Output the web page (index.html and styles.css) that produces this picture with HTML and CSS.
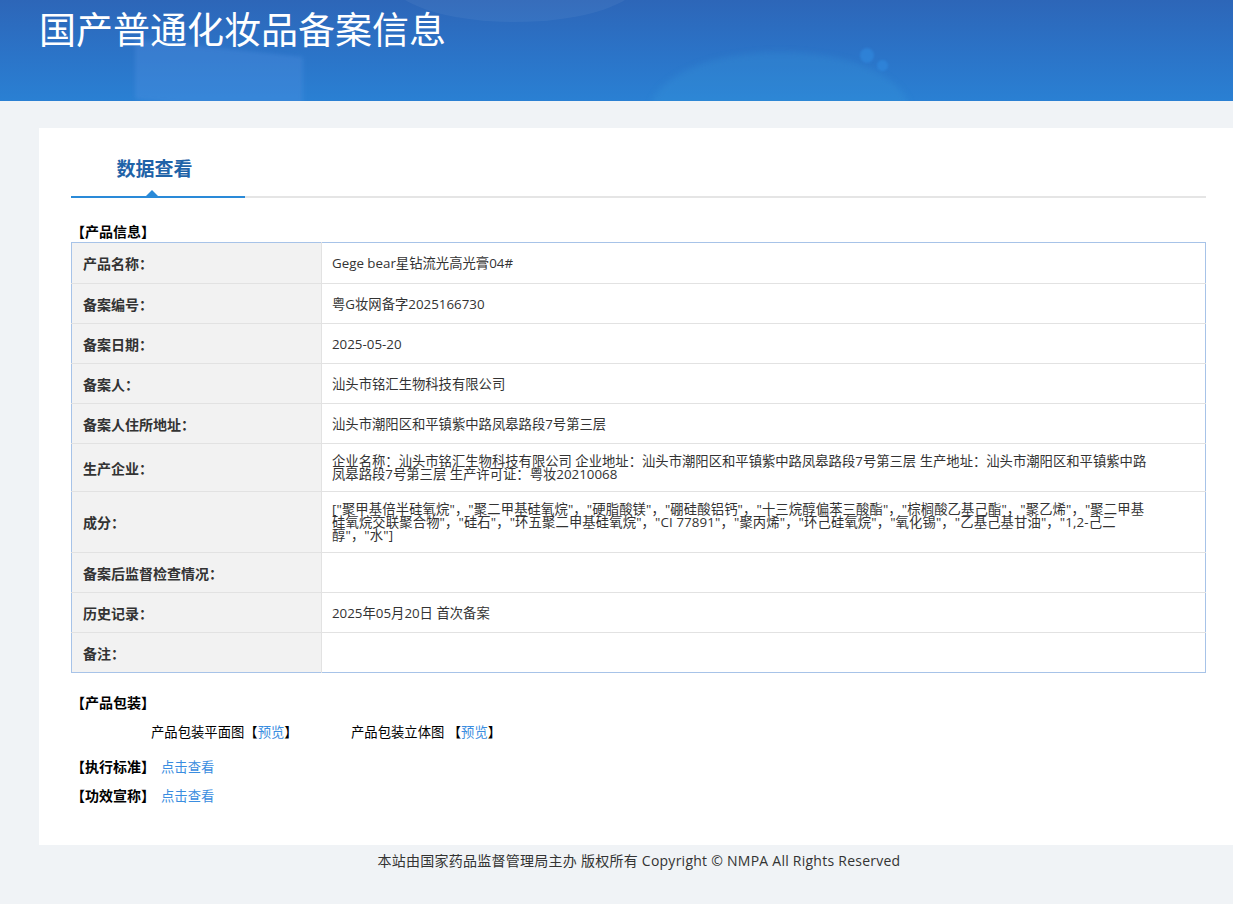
FILE: index.html
```html
<!DOCTYPE html>
<html lang="zh-CN">
<head>
<meta charset="utf-8">
<title>国产普通化妆品备案信息</title>
<link rel="stylesheet" href="styles.css">
</head>
<body>
<header class="banner">
  <div class="deco deco-a"></div>
  <div class="deco deco-b"></div>
  <div class="deco deco-c"></div>
  <div class="deco dot dot-1"></div>
  <div class="deco dot dot-2"></div>
  <h1 class="banner-title">国产普通化妆品备案信息</h1>
</header>

<div class="wrap">
  <main class="card">
    <div class="tabbar">
      <div class="tab">数据查看<span class="tab-arrow"></span></div>
    </div>

    <div class="sec-title first">【产品信息】</div>
    <table class="info">
      <tr><td class="lbl">产品名称：</td><td class="val">Gege bear星钻流光高光膏04#</td></tr>
      <tr><td class="lbl">备案编号：</td><td class="val">粤G妆网备字2025166730</td></tr>
      <tr><td class="lbl">备案日期：</td><td class="val">2025-05-20</td></tr>
      <tr><td class="lbl">备案人：</td><td class="val">汕头市铭汇生物科技有限公司</td></tr>
      <tr><td class="lbl">备案人住所地址：</td><td class="val">汕头市潮阳区和平镇紫中路凤皋路段7号第三层</td></tr>
      <tr><td class="lbl">生产企业：</td><td class="val">企业名称：汕头市铭汇生物科技有限公司 企业地址：汕头市潮阳区和平镇紫中路凤皋路段7号第三层 生产地址：汕头市潮阳区和平镇紫中路凤皋路段7号第三层 生产许可证：粤妆20210068</td></tr>
      <tr><td class="lbl">成分：</td><td class="val ingredients">["聚甲基倍半硅氧烷"，"聚二甲基硅氧烷"，"硬脂酸镁"，"硼硅酸铝钙"，"十三烷醇偏苯三酸酯"，"棕榈酸乙基己酯"，"聚乙烯"，"聚二甲基硅氧烷交联聚合物"，"硅石"，"环五聚二甲基硅氧烷"，"CI 77891"，"聚丙烯"，"环己硅氧烷"，"氧化锡"，"乙基己基甘油"，"1,2-己二醇"，"水"]</td></tr>
      <tr><td class="lbl">备案后监督检查情况：</td><td class="val"></td></tr>
      <tr><td class="lbl">历史记录：</td><td class="val">2025年05月20日 首次备案</td></tr>
      <tr><td class="lbl">备注：</td><td class="val"></td></tr>
    </table>

    <div class="sec-title pack">【产品包装】</div>
    <div class="pack-row">
      <span class="pack-item">产品包装平面图【<a class="link" href="#">预览</a>】</span>
      <span class="pack-item">产品包装立体图 【<a class="link" href="#">预览</a>】</span>
    </div>

    <div class="sec-title std">【执行标准】<a class="link plain" href="#">点击查看</a></div>
    <div class="sec-title eff">【功效宣称】<a class="link plain" href="#">点击查看</a></div>
  </main>
  <footer class="foot">本站由国家药品监督管理局主办 版权所有 Copyright © NMPA All Rights Reserved</footer>
</div>
</body>
</html>
```

FILE: styles.css
```css
html, body {
  margin: 0;
  padding: 0;
  overflow-x: hidden;
}
body {
  background: #f0f3f6;
  font-family: "Open Sans", "Noto Sans CJK SC", sans-serif;
  color: #333;
  font-size: 13.33px;
  min-height: 904px;
}

.banner {
  position: relative;
  height: 101px;
  overflow: hidden;
  background: linear-gradient(180deg, #2d66b8 0%, #2b74c8 55%, #2a80d3 100%);
}
.deco { position: absolute; }
.deco-a {
  left: 135px;
  top: 48px;
  width: 168px;
  height: 60px;
  background: rgba(90, 150, 230, 0.28);
  transform: skewY(6deg);
  filter: blur(2px);
}
.deco-b {
  left: 390px;
  top: -62px;
  width: 250px;
  height: 84px;
  border-radius: 50%;
  background: rgba(255, 255, 255, 0.05);
}
.deco-c {
  left: 650px;
  top: 52px;
  width: 260px;
  height: 120px;
  border-radius: 50%;
  background: rgba(60, 160, 225, 0.22);
  filter: blur(3px);
}
.dot {
  border-radius: 50%;
  background: rgba(50, 140, 225, 0.55);
  filter: blur(1px);
}
.dot-1 { left: 860px; top: 48px; width: 14px; height: 15px; }
.dot-2 { left: 877px; top: 60px; width: 11px; height: 11px; }

.banner-title {
  position: relative;
  margin: 0;
  padding-left: 39px;
  font-family: "Noto Sans CJK SC", sans-serif;
  font-size: 37px;
  line-height: 56px;
  font-weight: normal;
  color: #fff;
}

.wrap {
  width: 1200px;
  margin-left: 39px;
}

.card {
  display: block;
  margin-top: 27px;
  background: #fff;
  height: 717px;
  box-sizing: border-box;
  padding: 0 33px 0 32px;
}

.tabbar {
  height: 68px;
  border-bottom: 2px solid #e5e5e5;
}
.tab {
  position: relative;
  width: 174px;
  height: 70px;
  box-sizing: border-box;
  margin-bottom: -2px;
  padding-top: 28px;
  padding-right: 7px;
  line-height: 24px;
  text-align: center;
  font-family: "Noto Sans CJK SC", sans-serif;
  font-size: 19px;
  font-weight: bold;
  color: #1f63a8;
  border-bottom: 2px solid #2a8ad8;
}
.tab-arrow {
  position: absolute;
  left: 75px;
  bottom: 0;
  width: 0;
  height: 0;
  border-left: 6px solid transparent;
  border-right: 6px solid transparent;
  border-bottom: 6px solid #2a8ad8;
}

.sec-title {
  font-size: 14px;
  font-weight: bold;
  line-height: 20px;
  color: #000;
}
.sec-title.first { margin-top: 24px; }
.sec-title.pack { margin-top: 20px; }
.sec-title.std { margin-top: 15px; }
.sec-title.eff { margin-top: 9px; }

.info {
  width: 1135px;
  border-collapse: collapse;
  border: 1px solid #a7c3e8;
  table-layout: fixed;
}
.info td {
  border-top: 1px solid #e2e2e2;
  height: 18px;
  padding: 11px 10px 10px;
  line-height: 13px;
  font-size: 13.33px;
  vertical-align: middle;
}
.info tr:first-child td { border-top: none; height: 19px; }
.info .lbl {
  width: 228px;
  background: #f2f2f2;
  border-right: 1px solid #e2e2e2;
  font-size: 14px;
  font-weight: bold;
  color: #333;
  padding-left: 11px;
}
.info .val {
  color: #333;
  padding-right: 53px;
}
.info .ingredients {
  letter-spacing: 0.12px;
}

.pack-row {
  display: flex;
  margin-top: 9px;
  padding-left: 80px;
  line-height: 20px;
  color: #000;
}
.pack-item {
  width: 200px;
}
.link {
  color: #3a8de0;
  text-decoration: none;
  font-weight: normal;
  font-size: 13.33px;
}
.link.plain { margin-left: 6px; }

.foot {
  padding-top: 6px;
  line-height: 20px;
  text-align: center;
  font-size: 14px;
  letter-spacing: 0.25px;
  color: #333;
}
```
